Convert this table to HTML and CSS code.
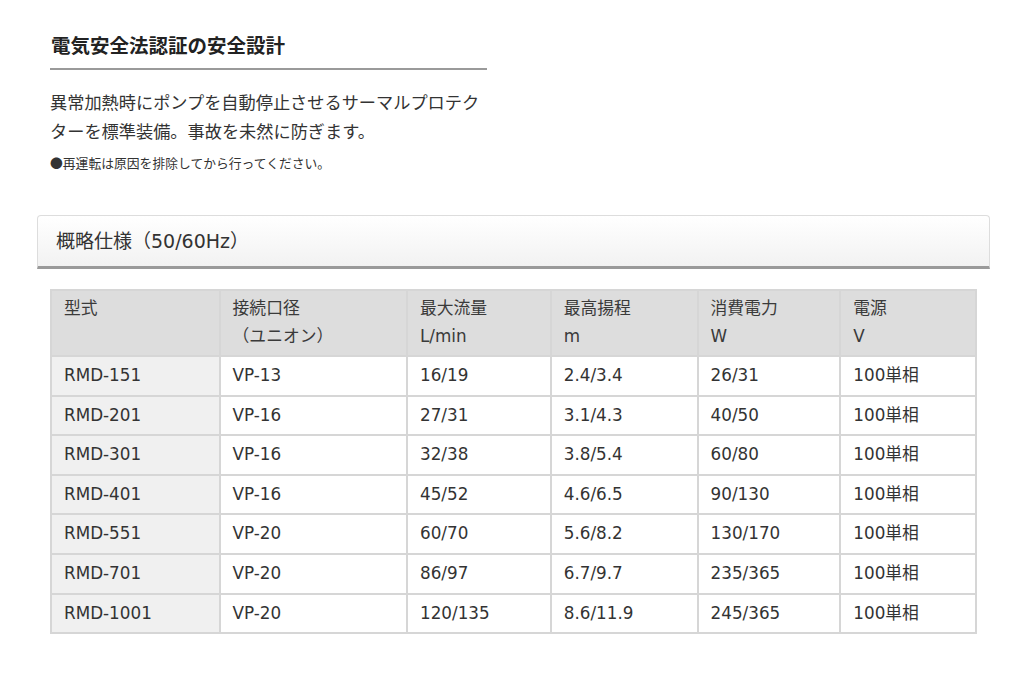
FILE: index.html
```html
<!DOCTYPE html>
<html lang="ja">
<head>
<meta charset="utf-8">
<link rel="stylesheet" href="styles.css">
</head>
<body>
<div class="page">
  <section class="feature">
    <h2 class="feature-title">電気安全法認証の安全設計</h2>
    <p class="feature-text">異常加熱時にポンプを自動停止させるサーマルプロテクターを標準装備。事故を未然に防ぎます。</p>
    <p class="feature-note">●再運転は原因を排除してから行ってください。</p>
  </section>
  <section class="spec">
    <div class="spec-head">概略仕様（50/60Hz）</div>
    <table class="spec-table">
      <colgroup>
        <col class="c1"><col class="c2"><col class="c3"><col class="c4"><col class="c5"><col class="c6">
      </colgroup>
      <thead>
        <tr>
          <th>型式</th>
          <th>接続口径<br>（ユニオン）</th>
          <th>最大流量<br>L/min</th>
          <th>最高揚程<br>m</th>
          <th>消費電力<br>W</th>
          <th>電源<br>V</th>
        </tr>
      </thead>
      <tbody>
        <tr><td>RMD-151</td><td>VP-13</td><td>16/19</td><td>2.4/3.4</td><td>26/31</td><td>100単相</td></tr>
        <tr><td>RMD-201</td><td>VP-16</td><td>27/31</td><td>3.1/4.3</td><td>40/50</td><td>100単相</td></tr>
        <tr><td>RMD-301</td><td>VP-16</td><td>32/38</td><td>3.8/5.4</td><td>60/80</td><td>100単相</td></tr>
        <tr><td>RMD-401</td><td>VP-16</td><td>45/52</td><td>4.6/6.5</td><td>90/130</td><td>100単相</td></tr>
        <tr><td>RMD-551</td><td>VP-20</td><td>60/70</td><td>5.6/8.2</td><td>130/170</td><td>100単相</td></tr>
        <tr><td>RMD-701</td><td>VP-20</td><td>86/97</td><td>6.7/9.7</td><td>235/365</td><td>100単相</td></tr>
        <tr><td>RMD-1001</td><td>VP-20</td><td>120/135</td><td>8.6/11.9</td><td>245/365</td><td>100単相</td></tr>
      </tbody>
    </table>
  </section>
</div>
</body>
</html>
```

FILE: styles.css
```css
html, body {
  margin: 0;
  padding: 0;
  background: #ffffff;
}
body {
  font-family: "DejaVu Sans", "Noto Sans CJK JP", sans-serif;
  color: #333333;
}
.page {
  padding: 31px 0 0 0;
}
.feature {
  margin-left: 50px;
  width: 437px;
}
.feature-title {
  margin: 0;
  font-family: "Noto Sans CJK JP", sans-serif;
  font-size: 19.5px;
  line-height: 28px;
  font-weight: 700;
  color: #222222;
  padding: 0 0 9px 1px;
  border-bottom: 2px solid #9a9a9a;
}
.feature-text {
  margin: 17px 0 0 0;
  font-family: "Noto Sans CJK JP", sans-serif;
  font-size: 17.2px;
  line-height: 29px;
  color: #333333;
  width: 440px;
}
.feature-note {
  margin: 8px 0 0 0;
  font-family: "Noto Sans CJK JP", sans-serif;
  font-size: 12.8px;
  line-height: 20px;
  color: #333333;
}
.spec {
  margin: 42px 0 0 37px;
  width: 953px;
}
.spec-head {
  height: 50px;
  line-height: 50px;
  padding-left: 18px;
  font-size: 19px;
  color: #333333;
  border: 1px solid #dddddd;
  border-bottom: 3px solid #9a9a9a;
  border-radius: 4px 4px 0 0;
  background: linear-gradient(#ffffff, #f2f2f2);
}
.spec-table {
  margin: 20px 0 0 13px;
  width: 927px;
  border-collapse: collapse;
  font-size: 16.8px;
  color: #333333;
}
.c1 { width: 169px; }
.c2 { width: 188px; }
.c3 { width: 144px; }
.c4 { width: 147px; }
.c5 { width: 143px; }
.c6 { width: 136px; }
.spec-table th,
.spec-table td {
  border: 2px solid #d6d6d6;
  text-align: left;
  vertical-align: top;
  padding: 0 12px;
}
.spec-table th {
  background: #dddddd;
  font-weight: 400;
  line-height: 28px;
  padding-top: 3px;
  padding-bottom: 5px;
  color: #3a3a3a;
}
.spec-table td {
  background: #ffffff;
  line-height: 23.6px;
  padding-top: 7px;
  padding-bottom: 7px;
}
.spec-table td:first-child {
  background: #f0f0f0;
}
```
